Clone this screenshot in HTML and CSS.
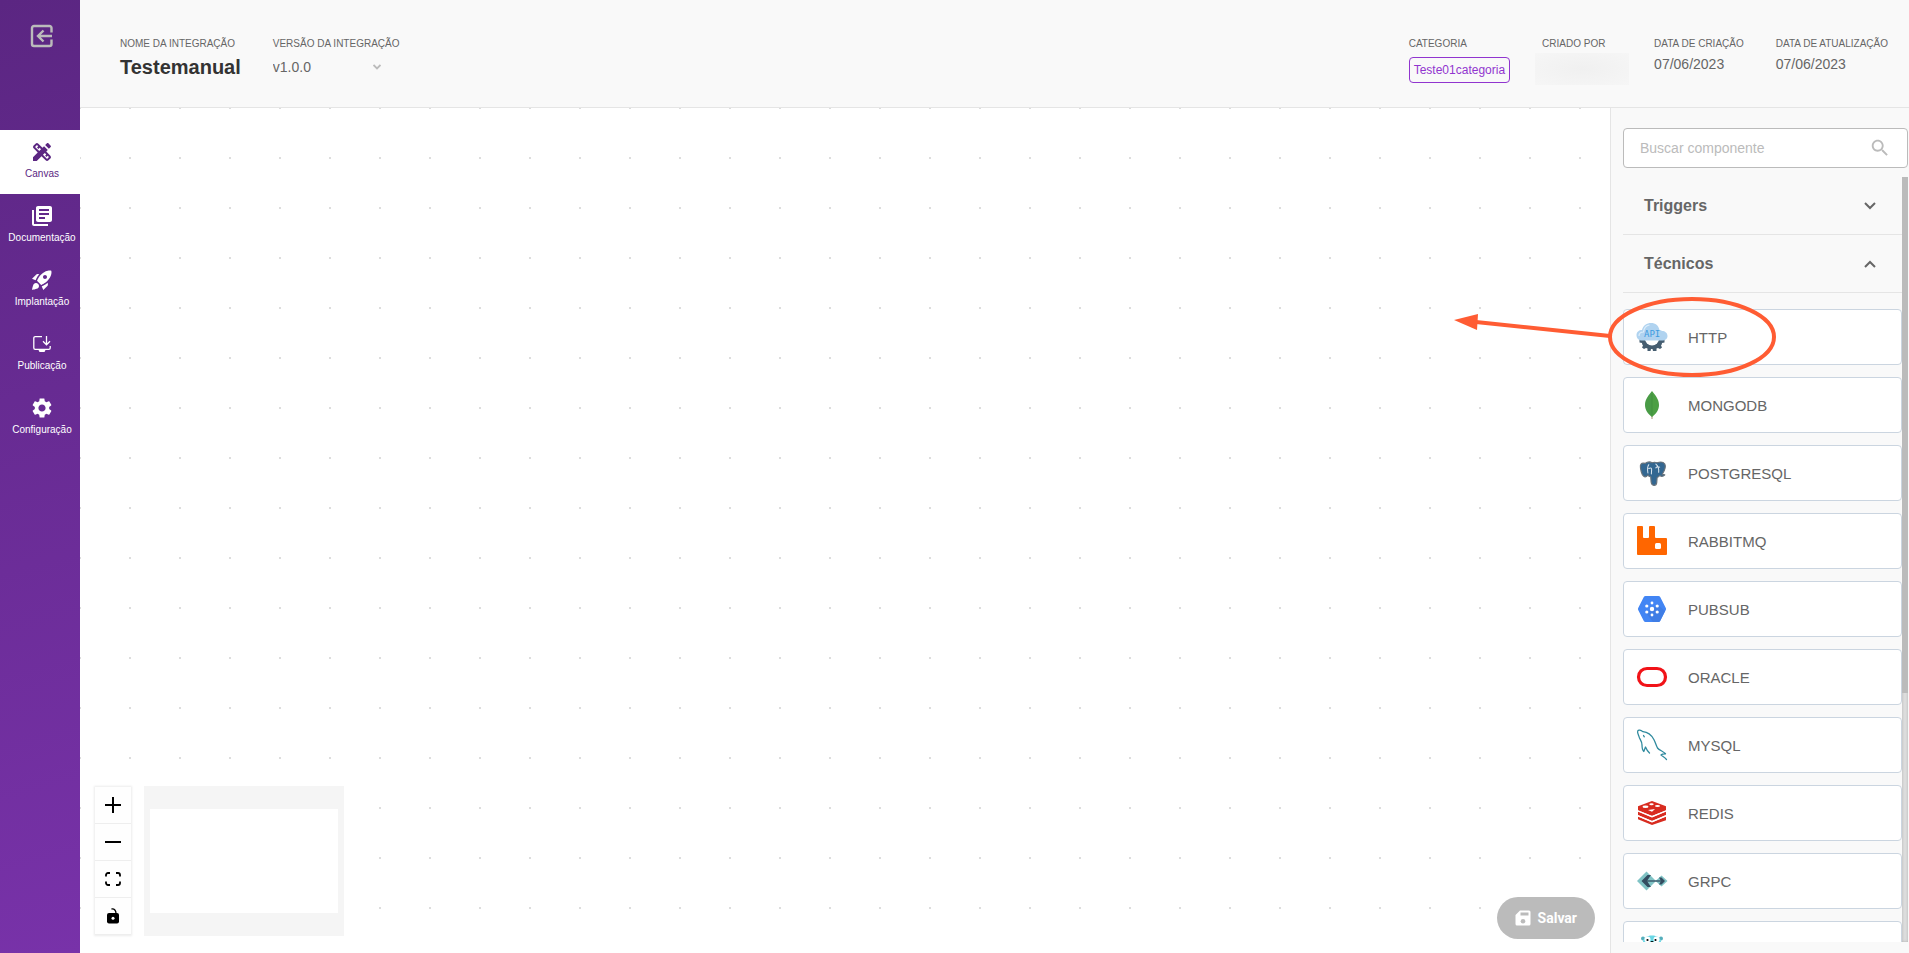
FILE: index.html
```html
<!doctype html>
<html lang="pt-BR">
<head>
  <meta charset="UTF-8">
  <meta name="viewport" content="width=device-width, initial-scale=1.0">
  <title>Canvas - Testemanual</title>
  <link rel="stylesheet" href="styles.css">
</head>
<body>
  <nav class="sidebar">
    <button class="exit" aria-label="Sair">
      <svg width="24" height="24" viewBox="0 0 24 24" fill="none" stroke="currentColor" stroke-width="2.400">
        <path d="M21.500 8.500V4a2 2 0 0 0-2-2H4a2 2 0 0 0-2 2v16a2 2 0 0 0 2 2h15.500a2 2 0 0 0 2-2v-4.500M22 12H8M13.500 6.500L8 12l5.500 5.500"/>
      </svg>
    </button>
    <a class="nav-item active" href="#canvas">
      <svg width="24" height="24" viewBox="0 0 24 24" fill="currentColor"><path d="M16.24 11.51l1.57-1.57-3.75-3.75-1.57 1.57-4.14-4.13c-.78-.78-2.05-.78-2.83 0l-1.9 1.9c-.78.78-.78 2.05 0 2.83l4.13 4.13L3 17.25V21h3.75l4.76-4.76 4.13 4.13c.95.95 2.23.6 2.83 0l1.9-1.9c.78-.78.78-2.05 0-2.83l-4.13-4.13zm-7.06-.44L5.04 6.94l1.89-1.9L8.2 6.31 7.02 7.5l1.41 1.41 1.19-1.19 1.45 1.45-1.89 1.9zm7.88 7.89l-4.13-4.13 1.9-1.9 1.45 1.45-1.19 1.19 1.41 1.41 1.19-1.19 1.27 1.27-1.9 1.9zM20.71 7.04c.39-.39.39-1.02 0-1.41l-2.34-2.34c-.47-.47-1.12-.29-1.41 0l-1.83 1.83 3.75 3.75 1.83-1.83z"/></svg>
      <span>Canvas</span>
    </a>
    <a class="nav-item" href="#documentacao">
      <svg width="24" height="24" viewBox="0 0 24 24" fill="currentColor"><path d="M4 6H2v14c0 1.1.9 2 2 2h14v-2H4V6zm16-4H8c-1.1 0-2 .9-2 2v12c0 1.1.9 2 2 2h12c1.1 0 2-.9 2-2V4c0-1.1-.9-2-2-2zm-1 9H9V9h10v2zm-4 4H9v-2h6v2zm4-8H9V5h10v2z"/></svg>
      <span>Documentação</span>
    </a>
    <a class="nav-item" href="#implantacao">
      <svg width="24" height="24" viewBox="0 0 24 24" fill="currentColor"><path d="M9.19 6.35c-2.04 2.29-3.44 5.58-3.57 5.89L2 10.69l4.05-4.05c.47-.47 1.15-.68 1.81-.55l1.33.26zM11.17 17s3.74-1.55 5.89-3.7c5.4-5.4 4.5-9.62 4.21-10.57-.95-.3-5.17-1.19-10.57 4.21C8.55 9.09 7 12.83 7 12.83L11.17 17zm6.48-2.19c-2.29 2.04-5.58 3.44-5.89 3.57L13.31 22l4.05-4.05c.47-.47.68-1.15.55-1.81l-.26-1.33zM9 18c0 .83-.34 1.58-.88 2.12C6.94 21.3 2 22 2 22s.7-4.94 1.88-6.12C4.42 15.34 5.17 15 6 15c1.66 0 3 1.34 3 3zm4-9c0-1.1.9-2 2-2s2 .9 2 2-.9 2-2 2-2-.9-2-2z"/></svg>
      <span>Implantação</span>
    </a>
    <a class="nav-item" href="#publicacao">
      <svg width="20" height="24" viewBox="0 0 20 24" fill="none" stroke="currentColor" stroke-width="1.300">
        <path d="M10 4.600H3.200a1.400 1.400 0 0 0-1.400 1.400v10a1.400 1.400 0 0 0 1.400 1.400h13.600a1.400 1.400 0 0 0 1.400-1.400v-2M14.500 4v8.500M11 9.300l3.500 3.500L18 9.300"/>
        <path d="M6.500 18h7l-1 2h-5z" fill="currentColor" stroke="none"/>
      </svg>
      <span>Publicação</span>
    </a>
    <a class="nav-item" href="#configuracao">
      <svg width="24" height="24" viewBox="0 0 24 24" fill="currentColor"><path d="M19.14 12.94c.04-.3.06-.61.06-.94 0-.32-.02-.64-.07-.94l2.03-1.58c.18-.14.23-.41.12-.61l-1.92-3.32c-.12-.22-.37-.29-.59-.22l-2.39.96c-.5-.38-1.03-.7-1.62-.94l-.36-2.54c-.04-.24-.24-.41-.48-.41h-3.84c-.24 0-.43.17-.47.41l-.36 2.54c-.59.24-1.13.57-1.62.94l-2.39-.96c-.22-.08-.47 0-.59.22L2.74 8.87c-.12.21-.08.47.12.61l2.03 1.58c-.05.3-.09.63-.09.94s.02.64.07.94l-2.03 1.58c-.18.14-.23.41-.12.61l1.92 3.32c.12.22.37.29.59.22l2.39-.96c.5.38 1.03.7 1.62.94l.36 2.54c.05.24.24.41.48.41h3.84c.24 0 .44-.17.47-.41l.36-2.54c.59-.24 1.13-.56 1.62-.94l2.39.96c.22.08.47 0 .59-.22l1.92-3.32c.12-.22.07-.47-.12-.61l-2.01-1.58zM12 15.6c-1.98 0-3.6-1.62-3.6-3.6s1.62-3.6 3.6-3.6 3.6 1.62 3.6 3.6-1.62 3.6-3.6 3.6z"/></svg>
      <span>Configuração</span>
    </a>
  </nav>

  <div class="page">
    <header class="header">
      <div class="field">
        <span class="label">NOME DA INTEGRAÇÃO</span>
        <h1>Testemanual</h1>
      </div>
      <div class="field">
        <label class="label" for="version">VERSÃO DA INTEGRAÇÃO</label>
        <div class="version">
          <select id="version"><option>v1.0.0</option></select>
          <svg width="8" height="6" viewBox="0 0 8 6" fill="none" stroke="#bbb" stroke-width="1.800"><path d="M.5 1L4 4.500 7.500 1"/></svg>
        </div>
      </div>
      <div class="field push">
        <span class="label">CATEGORIA</span>
        <span class="tag">Teste01categoria</span>
      </div>
      <div class="field author">
        <span class="label">CRIADO POR</span>
        <span class="hidden-name"></span>
      </div>
      <div class="field">
        <span class="label">DATA DE CRIAÇÃO</span>
        <span class="value">07/06/2023</span>
      </div>
      <div class="field">
        <span class="label">DATA DE ATUALIZAÇÃO</span>
        <span class="value">07/06/2023</span>
      </div>
    </header>

    <div class="workspace">
      <main class="canvas">
        <div class="controls">
          <button aria-label="Aumentar zoom"><svg width="16" height="16" viewBox="0 0 16 16" stroke="#000" stroke-width="2"><path d="M0 8h16M8 0v16"/></svg></button>
          <button aria-label="Diminuir zoom"><svg width="16" height="16" viewBox="0 0 16 16" stroke="#000" stroke-width="2"><path d="M0 8h16"/></svg></button>
          <button aria-label="Ajustar à tela"><svg width="16" height="16" viewBox="0 0 16 16" fill="none" stroke="#000" stroke-width="1.800"><path d="M1 5.500V4a2 2 0 0 1 2-2h2M11 2h2a2 2 0 0 1 2 2v1.500M15 10.500V12a2 2 0 0 1-2 2h-2M5 14H3a2 2 0 0 1-2-2v-1.500"/></svg></button>
          <button aria-label="Bloquear"><svg width="16" height="16" viewBox="0 0 16 16"><path d="M6.500 1c3-.5 4.500 1.500 4.500 4.500" fill="none" stroke="#000" stroke-width="1.300"/><rect x="2" y="5" width="12" height="10.500" rx="2"/><circle cx="8" cy="10.300" r="1.500" fill="#fff"/></svg></button>
        </div>
        <div class="minimap"><div class="viewport"></div></div>
        <button class="save">
          <svg width="16" height="16" viewBox="0 0 16 16"><path d="M5 .5h9A1.500 1.500 0 0 1 15.500 2v12a1.500 1.500 0 0 1-1.500 1.500H2A1.500 1.500 0 0 1 .5 14V5z" fill="#fff"/><path d="M5.500 2.500h8v3h-8z" fill="#bbb"/><circle cx="8" cy="11.200" r="2.300" fill="#bbb"/></svg>
          <span>Salvar</span>
        </button>
      </main>

      <aside class="panel">
        <div class="search">
          <input type="text" placeholder="Buscar componente" aria-label="Buscar componente">
          <svg width="22" height="22" viewBox="0 0 24 24" fill="#bbb"><path d="M15.5 14h-.79l-.28-.27C15.41 12.59 16 11.11 16 9.5 16 5.91 13.09 3 9.5 3S3 5.91 3 9.5 5.91 16 9.5 16c1.61 0 3.09-.59 4.23-1.57l.27.28v.79l5 4.99L20.49 19l-4.99-5zm-6 0C7.01 14 5 11.99 5 9.5S7.01 5 9.5 5 14 7.01 14 9.5 11.99 14 9.5 14z"/></svg>
        </div>

        <div class="scroll">
          <div class="scroll-content">
            <button class="group">
              Triggers
              <svg width="12" height="8" viewBox="0 0 12 8" fill="none" stroke="#666" stroke-width="2"><path d="M1 1l5 5 5-5"/></svg>
            </button>
            <button class="group">
              Técnicos
              <svg width="12" height="8" viewBox="0 0 12 8" fill="none" stroke="#666" stroke-width="2"><path d="M1 7l5-5 5 5"/></svg>
            </button>
            <ul class="components">
              <li draggable="true">
                <svg width="32" height="32" viewBox="0 0 32 32">
                  <path d="M3.500 18h25v3.500l-2.500.5c0 1-.5 2-1 2.500l1 2-2 1.500-2-1-1.500.6v2.400h-3.500l-.5-2h-1.500l-.5 2H11.500v-2.400L10 27l-2 1-2-1.500 1-2c-.5-.5-1-1.500-1-2.500l-2.500-.5z" fill="#455d70"/>
                  <path d="M9 18h14a7 6.500 0 0 1-14 0z" fill="#fff"/>
                  <path d="M6 19.500C2.500 19.500.5 17 .5 14 .5 11 3 9 6 9 7 4.500 11 2 15 2c4.500 0 7.500 2.500 8.500 7 1 0 1.800.3 2.500 1 3 0 5.500 2 5.500 5s-2.500 4.500-5.500 4.500z" fill="#b0d3f0"/>
                  <path d="M3 15c0-3 1.500-4 4.500-4 .5-4 3-6.500 6-7" fill="none" stroke="#deeefb" stroke-width="1.200"/>
                  <text x="8" y="16" class="api">API</text>
                </svg>
                HTTP
              </li>
              <li draggable="true">
                <svg width="32" height="32" viewBox="0 0 32 32">
                  <path d="M16 26v4" stroke="#b8a58c" stroke-width="1.200"/>
                  <path d="M16 2c-3 4-7 8-7 14 0 5 3 9 7 12z" fill="#499b46"/>
                  <path d="M16 2c3 4 7 8 7 14 0 5-3 9-7 12z" fill="#4c9f44"/>
                  <path d="M16 5v21" stroke="#3f8f3e" stroke-width=".8"/>
                </svg>
                MONGODB
              </li>
              <li draggable="true">
                <svg width="32" height="32" viewBox="3 4 25 25" stroke-linecap="round" stroke-linejoin="round">
                  <path d="M10 9c-3-.8-4 1-3.500 3.500.4 3 1.500 6.500 3.500 7 1 .2 2-1 2.500-1.500 0 1 1 1.300 2 1.500l.3 4c.3 3.300 4 3.500 4.400.5l.3-4c1-.4 1.600-.8 2-1.500 1.500 1 3 .5 4-.5l-2-.5c2-3 3-6 2-8-1.500-2.200-4-1.700-6-1-1.300-.5-2.700-.5-4 0-1.500-1-3.500-.8-5.500.5z" fill="#336791" stroke="#67727b" stroke-width=".9"/>
                  <path d="M13 10c-1.500 2-1 4.500-.7 6.500M13 13c1.700-1 2.400-.3 2.200 1.200l-.2 3M18.500 9.500c2 1.500 2.500 3.500 2.200 6.500M18.500 12.500c.7-1 2-1 3-.6" fill="none" stroke="#dce6ee" stroke-width=".8"/>
                </svg>
                POSTGRESQL
              </li>
              <li draggable="true">
                <svg width="32" height="32" viewBox="0 0 32 32">
                  <path d="M2 1h4a1 1 0 0 1 1 1v10a1 1 0 0 0 1 1h4a1 1 0 0 0 1-1V2a1 1 0 0 1 1-1h4a1 1 0 0 1 1 1v10a1 1 0 0 0 1 1h10a1 1 0 0 1 1 1v15a1 1 0 0 1-1 1H2a1 1 0 0 1-1-1V2a1 1 0 0 1 1-1z" fill="#ff6600"/>
                  <rect x="19" y="18" width="6" height="6" rx="1.500" fill="#fff"/>
                </svg>
                RABBITMQ
              </li>
              <li draggable="true">
                <svg width="32" height="32" viewBox="0 0 32 32">
                  <path d="M9.500 3h13a2 2 0 0 1 1.700 1l5.600 11a2 2 0 0 1 0 2l-5.600 11a2 2 0 0 1-1.700 1h-13a2 2 0 0 1-1.700-1L2.200 17a2 2 0 0 1 0-2L7.800 4a2 2 0 0 1 1.700-1z" fill="#4285f4"/>
                  <path d="M22 12l7 6-5 10a2 2 0 0 1-1.500 1H17l-7-9z" fill="#3f7de5"/>
                  <g fill="#fff"><circle cx="16" cy="16" r="2.200"/><circle cx="16" cy="10" r="1.400"/><circle cx="16" cy="22" r="1.400"/><circle cx="10.800" cy="13" r="1.600"/><circle cx="21.200" cy="13" r="1.600"/><circle cx="10.800" cy="19" r="1.600"/><circle cx="21.200" cy="19" r="1.600"/></g>
                </svg>
                PUBSUB
              </li>
              <li draggable="true">
                <svg width="32" height="32" viewBox="0 0 32 32"><rect x="2.500" y="7.500" width="27" height="17" rx="8.500" fill="none" stroke="#f11318" stroke-width="3.200"/></svg>
                ORACLE
              </li>
              <li draggable="true">
                <svg width="32" height="32" viewBox="0 0 32 32" fill="none" stroke="#2f8a9e" stroke-width="1.300" stroke-linejoin="round" stroke-linecap="round">
                  <path d="M13.500 24c-1.500-1.500-3-3.500-4-6l-1.700 4.500C6.200 21 6 19 6 16c0-3-1.500-5-2.500-7C2.500 6 1 3.500 1.700 2c.8-1.500 3-.8 5.300.7 4.500.3 8.500 3.500 11 8 1.200 2.300 2 5.300 3.500 8.300 2 2.500 5.500 3 8 5.800-1.500 0-3.500-.1-4.500 1.200 1.500 1.300 3.500 2.200 5.500 4.500"/>
                  <path d="M7.500 6.500l.8 1.300"/>
                </svg>
                MYSQL
              </li>
              <li draggable="true">
                <svg width="32" height="32" viewBox="0 0 32 32" fill="#d82c20">
                  <path d="M2 19.500l14 6 14-6v3.800L16 28 2 22.300z"/>
                  <path d="M2 14.500l14 5.800 14-5.800v3.500L16 24 2 18z"/>
                  <path d="M2 9.300L16 4l14 5.300v4L16 19 2 13.300z"/>
                  <g fill="#fff"><ellipse cx="15.500" cy="7.300" rx="2.200" ry="1"/><ellipse cx="9.500" cy="9.800" rx="3" ry="1.200"/><ellipse cx="21.500" cy="9" rx="2.500" ry="1.100"/><path d="M12 13l7-1-3 2.800z"/></g>
                  <path d="M2 14l14 5.700L30 14M2 18.800l14 5.800 14-5.800" fill="none" stroke="#fff" stroke-width="1.300"/>
                </svg>
                REDIS
              </li>
              <li draggable="true">
                <svg width="32" height="32" viewBox="0 0 32 32">
                  <path d="M10.500 6.500L20 16l-9.500 9.500L1 16z" fill="#80c3c5"/>
                  <path d="M25.500 10.500L31.500 16l-6 5.500L19.500 16z" fill="#80c3c5"/>
                  <path d="M15 10h-3.500l-6 6 6 6H15l-4-6zM23 12.500h2.500L29 16l-3.500 3.500H23l2-3.500z" fill="#334c60"/>
                  <path d="M9 16h18" stroke="#334c60" stroke-width="1.300"/>
                </svg>
                GRPC
              </li>
              <li draggable="true" aria-label="Gopher">
                <svg width="32" height="32" viewBox="0 0 32 32">
                  <circle cx="7" cy="5.500" r="2" fill="#55aebb"/><circle cx="25" cy="5.500" r="2" fill="#55aebb"/>
                  <path d="M7 9c0-4 4-6.500 9-6.500s9 2.500 9 6.500v19H7z" fill="#6ad7e5"/>
                  <circle cx="11.500" cy="6.500" r="3" fill="#fff"/><circle cx="20.500" cy="6.500" r="3" fill="#fff"/>
                  <circle cx="11.500" cy="7" r="1.100"/><circle cx="19.500" cy="7" r="1.100"/>
                  <ellipse cx="16" cy="9" rx="1.500" ry="1"/><path d="M13.500 10.500h5v3h-5z" fill="#f6d2a2"/>
                </svg>
              </li>
            </ul>
          </div>
          <div class="track"><div class="thumb"></div></div>
        </div>

        <svg class="drag-hint" width="330" height="90" viewBox="0 0 330 90" fill="none" stroke="#ff5c33" stroke-width="4">
          <ellipse cx="242" cy="47" rx="82" ry="38"/>
          <path d="M160 46L26 32"/>
          <path d="M4 30l24-6-1 16z" fill="#ff5c33" stroke="none"/>
        </svg>
      </aside>
    </div>
  </div>
</body>
</html>
```
FILE: styles.css
```css
* {
  margin: 0;
  padding: 0;
  box-sizing: border-box;
}
body {
  display: flex;
  height: 100vh;
  overflow: hidden;
  font-family: "Liberation Sans", Arial, sans-serif;
  color: #666;
  background: #fff;
}
button {
  font: inherit;
  color: inherit;
  border: none;
  background: none;
  cursor: pointer;
}
svg {
  display: block;
  flex-shrink: 0;
}

/* sidebar */
.sidebar {
  width: 80px;
  flex-shrink: 0;
  background: linear-gradient(165deg, #5b2682, #7832a9);
}
.exit {
  display: flex;
  justify-content: center;
  width: 100%;
  height: 130px;
  padding: 24px 0 0 4px;
  color: #bbb;
}
.nav-item {
  display: flex;
  flex-direction: column;
  align-items: center;
  gap: 4px;
  height: 64px;
  padding: 10px 0 0 4px;
  font-size: 10px;
  line-height: 12px;
  color: #fff;
  text-decoration: none;
}
.nav-item.active {
  background: #fff;
  color: #5b2682;
}
.nav-item span {
  margin-top: auto;
  margin-bottom: 14px;
}

/* header */
.page {
  flex: 1;
  min-width: 0;
  display: flex;
  flex-direction: column;
}
.header {
  display: flex;
  gap: 32px;
  height: 108px;
  padding: 38px 21px 0 40px;
  background: #f9f9f9;
  border-bottom: 1px solid #e5e5e5;
}
.field {
  display: flex;
  flex-direction: column;
  align-items: flex-start;
}
.push {
  margin-left: auto;
}
.label {
  font-size: 10px;
  line-height: 12px;
  white-space: nowrap;
}
h1 {
  margin-top: 5px;
  font-size: 20px;
  line-height: 24px;
  color: #333;
}
.value {
  margin-top: 5px;
  font-size: 14px;
  line-height: 18px;
}
.version {
  display: flex;
  align-items: center;
  margin-top: 7px;
}
.version select {
  width: 100px;
  font: inherit;
  font-size: 14px;
  line-height: 20px;
  color: #666;
  border: none;
  background: none;
  appearance: none;
}
.tag {
  margin-top: 7px;
  padding: 0 4px;
  font-size: 12px;
  line-height: 24px;
  color: #9135cf;
  border: 1px solid #9135cf;
  border-radius: 4px;
}
.author {
  width: 80px;
}
.hidden-name {
  width: 94px;
  height: 32px;
  margin: 3px 0 0 -7px;
  background: radial-gradient(ellipse, #f0f0f0, #f6f6f6);
}

/* canvas */
.workspace {
  flex: 1;
  min-height: 0;
  display: flex;
}
.canvas {
  flex: 1;
  display: flex;
  align-items: flex-end;
  padding: 0 15px 17px;
  background: conic-gradient(from 90deg at 48px 48px, #ddd 25%, transparent 0) 1px 1px / 50px 50px;
}
.controls {
  margin-bottom: 1px;
  box-shadow: 0 0 2px 1px rgba(0, 0, 0, 0.08);
}
.controls button {
  display: flex;
  align-items: center;
  justify-content: center;
  width: 36px;
  height: 37px;
  background: #fefefe;
  border-bottom: 1px solid #eee;
}
.minimap {
  width: 200px;
  height: 150px;
  margin-left: 13px;
  padding: 23px 6px;
  background: #f5f5f5;
}
.viewport {
  height: 104px;
  background: #fff;
}
.save {
  display: flex;
  align-items: center;
  justify-content: center;
  gap: 7px;
  height: 42px;
  margin: 0 0 -3px auto;
  padding: 0 18px;
  font: bold 14px Roboto, sans-serif;
  color: #fff;
  background: #bbb;
  border-radius: 21px;
}

/* components panel */
.panel {
  position: relative;
  width: 299px;
  flex-shrink: 0;
  display: flex;
  flex-direction: column;
  gap: 9px;
  padding: 20px 1px 11px 12px;
  background: #f9f9f9;
  border-left: 1px solid #e5e5e5;
}
.search {
  display: flex;
  align-items: center;
  height: 40px;
  padding: 0 16px;
  background: #fff;
  border: 1px solid #bbb;
  border-radius: 4px;
}
.search input {
  flex: 1;
  min-width: 0;
  font: inherit;
  font-size: 14px;
  border: none;
  outline: none;
  background: none;
}
.search input::placeholder {
  color: #bbb;
}
.scroll {
  flex: 1;
  min-height: 0;
  display: flex;
}
.scroll-content {
  flex: 1;
  overflow-y: auto;
  scrollbar-width: none;
}
.track {
  width: 6px;
  background: #ddd;
  box-shadow: inset 0 0 3px rgba(0, 0, 0, 0.2);
}
.thumb {
  height: 67.4%;
  background: #bbb;
}
.group {
  display: flex;
  align-items: center;
  justify-content: space-between;
  width: 100%;
  height: 58px;
  padding: 0 26px 0 21px;
  font-size: 16px;
  font-weight: bold;
  border-bottom: 1px solid #e5e5e5;
}
.components {
  display: flex;
  flex-direction: column;
  gap: 12px;
  padding: 16px 0;
  list-style: none;
}
.components li {
  display: flex;
  align-items: center;
  gap: 20px;
  height: 56px;
  padding-left: 12px;
  font-size: 15px;
  background: #fff;
  border: 1px solid #cbd5e0;
  border-radius: 4px;
  cursor: grab;
}
.api {
  font: 9px "DejaVu Sans Mono", monospace;
  fill: #3d9be0;
}
.drag-hint {
  position: absolute;
  top: 182px;
  left: -161px;
  pointer-events: none;
}
```
